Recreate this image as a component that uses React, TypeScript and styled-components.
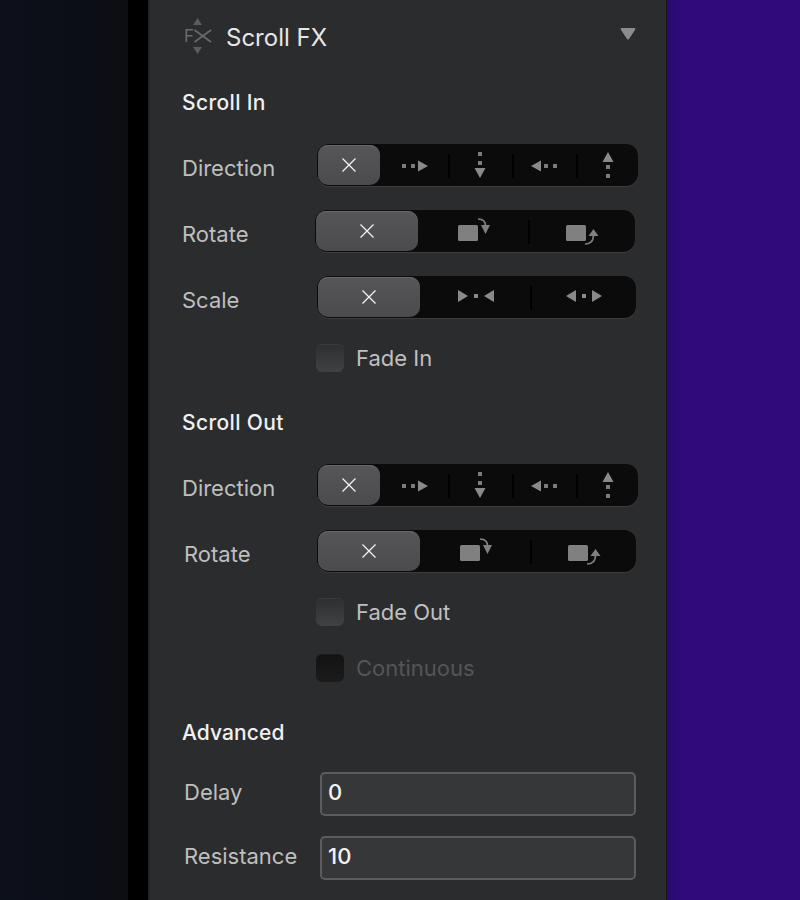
import React from "react"
import styled, { createGlobalStyle } from "styled-components"

const GlobalStyle = createGlobalStyle`
  html, body {
    margin: 0;
    padding: 0;
    background: #000;
  }
  body {
    font-family: Inter, "Noto Sans", "Liberation Sans", sans-serif;
  }
`

const ArrowIcon: React.FC<{ angle: number }> = ({ angle }) => (
  <svg width="28" height="28" viewBox="0 0 28 28" style={{ transform: `rotate(${angle}deg)` }}>
    <rect x="1" y="12" width="4" height="4" fill="#7c7c7c" />
    <rect x="10" y="12" width="4" height="4" fill="#7c7c7c" />
    <polygon points="17,8.5 27,14 17,19.5" fill="#8a8a8a" />
  </svg>
)

const ScaleIcon: React.FC<{ out?: boolean }> = ({ out }) => (
  <svg width="36" height="14" viewBox="0 0 36 14">
    <rect x="16" y="4" width="4" height="4" fill="#8a8a8a" />
    {out ? (
      <>
        <polygon points="0,6 10,0 10,12" fill="#8a8a8a" />
        <polygon points="36,6 26,0 26,12" fill="#8a8a8a" />
      </>
    ) : (
      <>
        <polygon points="10,6 0,0 0,12" fill="#8a8a8a" />
        <polygon points="26,6 36,0 36,12" fill="#8a8a8a" />
      </>
    )}
  </svg>
)

const RotateIcon: React.FC<{ up?: boolean }> = ({ up }) => (
  <svg width="33" height="27" viewBox="0 0 33 27">
    <rect x="0" y="7" width="20" height="16" rx="1.5" fill="#808080" />
    {up ? (
      <>
        <path d="M19 26 C24 26 27.5 23.5 27.5 17" fill="none" stroke="#808080" strokeWidth="1.7" />
        <polygon points="27.5,11 32.5,18 22.5,18" fill="#808080" />
      </>
    ) : (
      <>
        <path d="M20 1 C25 1 27.5 3.5 27.5 8" fill="none" stroke="#808080" strokeWidth="1.7" />
        <polygon points="27.5,16 32,7 23,7" fill="#808080" />
      </>
    )}
  </svg>
)

const CloseIcon = () => (
  <svg width="16" height="16" viewBox="0 0 16 16">
    <path d="M1.5 1.5 L14.5 14.5 M14.5 1.5 L1.5 14.5" stroke="#f2f2f2" strokeWidth="1.3" fill="none" />
  </svg>
)

const FxLogo = () => (
  <svg width="30" height="38" viewBox="0 0 30 38">
    <polygon points="13.5,0 18,7 9,7" fill="#5c5c5c" />
    <polygon points="13.5,36 18,29 9,29" fill="#5c5c5c" />
    <text x="0" y="24" fontFamily="Inter, sans-serif" fontSize="17" fill="#6a6a6a">
      F
    </text>
    <path d="M10.5 12 L27 24 M27 12 L10.5 24" stroke="#6a6a6a" strokeWidth="1.7" fill="none" />
  </svg>
)

const Page = styled.div`
  display: flex;
  width: 800px;
  height: 900px;
  overflow: hidden;
`

const Backdrop = styled.div`
  width: 128px;
  background: linear-gradient(90deg, #0c101a 0%, #0c0e16 70%, #0d0e12 100%);
`

const Gutter = styled.div`
  width: 20px;
  background: #000;
`

const Panel = styled.main`
  box-sizing: border-box;
  width: 519px;
  height: 900px;
  padding: 0 28px 0 32px;
  background: #2b2c2e;
  border-left: 2px solid #242526;
  border-right: 1px solid #161618;
`

const Canvas = styled.div`
  flex: 1;
  background: linear-gradient(90deg, #2a0a72 0, #300a7b 14px);
`

const Header = styled.header`
  display: flex;
  align-items: center;
  height: 74px;
  padding-left: 2px;
`

const Title = styled.h1`
  margin: 0 0 0 12px;
  flex: 1;
  font-size: 24px;
  font-weight: 400;
  color: #e6e6e6;
`

const Caret = styled.svg`
  margin: 0 2px 6px 0;
`

const Heading = styled.h2<{ $top: number; $tracking?: number }>`
  margin: ${(p) => p.$top}px 0 0;
  height: 26px;
  font-size: 21px;
  line-height: 28px;
  font-weight: 500;
  letter-spacing: ${(p) => p.$tracking ?? 0.35}px;
  color: #f0f0f0;
`

const Row = styled.div<{ $top: number; $inset?: number }>`
  display: flex;
  height: 42px;
  margin-top: ${(p) => p.$top}px;
  padding-left: ${(p) => p.$inset ?? 0}px;
`

const Label = styled.span<{ $width: number }>`
  width: ${(p) => p.$width}px;
  flex: none;
  font-size: 22px;
  line-height: 48px;
  color: #bfbfbf;
`

const Segmented = styled.div<{ $width: number; $columns: string }>`
  box-sizing: border-box;
  display: grid;
  flex: none;
  grid-template-columns: ${(p) => p.$columns};
  width: ${(p) => p.$width}px;
  height: 42px;
  padding: 1px;
  background: #0b0b0c;
  border-radius: 12px;
  box-shadow: 0 1px 0 #3c3d3f;
`

const Segment = styled.div<{ $active?: boolean; $divider?: boolean; $nudge?: number; $drop?: number }>`
  position: relative;
  display: flex;
  align-items: center;
  justify-content: center;
  padding-left: ${(p) => p.$nudge ?? 0}px;
  padding-top: ${(p) => p.$drop ?? 0}px;
  border-radius: 10px;
  background: ${(p) => (p.$active ? "linear-gradient(#565658, #4b4b4d)" : "transparent")};
  box-shadow: ${(p) => (p.$active ? "inset 0 1px 0 #686869" : "none")};

  ${(p) =>
    p.$divider &&
    `&::before {
      content: "";
      position: absolute;
      left: 0;
      top: 9px;
      width: 2px;
      height: 24px;
      background: #000;
    }`}
`

const CheckRow = styled.label<{ $top: number }>`
  display: flex;
  align-items: center;
  gap: 12px;
  height: 28px;
  margin: ${(p) => p.$top}px 0 0 134px;
`

const Box = styled.span<{ $disabled?: boolean }>`
  width: 28px;
  height: 28px;
  border-radius: 6px;
  background: ${(p) =>
    p.$disabled ? "linear-gradient(#121213, #1c1c1d)" : "linear-gradient(#2d2e30, #414244)"};
  box-shadow: inset 0 1px 0 ${(p) => (p.$disabled ? "#1a1a1b" : "#3a3b3d")};
`

const CheckText = styled.span<{ $disabled?: boolean }>`
  font-size: 22px;
  color: ${(p) => (p.$disabled ? "#545557" : "#bfbfbf")};
`

const FieldRow = styled.div<{ $top: number }>`
  display: flex;
  height: 44px;
  margin-top: ${(p) => p.$top}px;
  padding-left: 2px;

  ${Label} {
    line-height: 40px;
  }
`

const FieldInput = styled.input`
  box-sizing: border-box;
  width: 316px;
  height: 44px;
  padding: 0 6px 4px;
  margin: 0;
  font-family: inherit;
  font-size: 22px;
  font-weight: 500;
  color: #f4f4f4;
  background: #363739;
  border: 2px solid #5b5c5e;
  border-radius: 5px;
  outline: none;
`

const DirectionControl = () => (
  <Segmented $width={321} $columns="62px 68px 64px 64px 1fr">
    <Segment $active>
      <CloseIcon />
    </Segment>
    <Segment $nudge={2} $drop={2}>
      <ArrowIcon angle={0} />
    </Segment>
    <Segment $divider>
      <ArrowIcon angle={90} />
    </Segment>
    <Segment $divider $drop={2}>
      <ArrowIcon angle={180} />
    </Segment>
    <Segment $divider $nudge={2}>
      <ArrowIcon angle={270} />
    </Segment>
  </Segmented>
)

const RotateControl: React.FC<{ width: number }> = ({ width }) => (
  <Segmented $width={width} $columns="102px 110px 1fr">
    <Segment $active>
      <CloseIcon />
    </Segment>
    <Segment $nudge={3}>
      <RotateIcon />
    </Segment>
    <Segment $divider $nudge={3}>
      <RotateIcon up />
    </Segment>
  </Segmented>
)

const ScaleControl = () => (
  <Segmented $width={319} $columns="102px 110px 1fr">
    <Segment $active>
      <CloseIcon />
    </Segment>
    <Segment $nudge={1}>
      <ScaleIcon />
    </Segment>
    <Segment $divider $nudge={3}>
      <ScaleIcon out />
    </Segment>
  </Segmented>
)

export default function App() {
  return (
    <Page>
      <GlobalStyle />
      <Backdrop />
      <Gutter />
      <Panel>
        <Header>
          <FxLogo />
          <Title>Scroll FX</Title>
          <Caret width="16" height="12" viewBox="0 0 16 12">
            <path d="M1.5 0 H14.5 Q16 0 15 2 L9 11 Q8 12 7 11 L1 2 Q0 0 1.5 0 Z" fill="#8c8c8c" />
          </Caret>
        </Header>

        <Heading $top={15}>Scroll In</Heading>
        <Row $top={29}>
          <Label $width={135}>Direction</Label>
          <DirectionControl />
        </Row>
        <Row $top={24}>
          <Label $width={133}>Rotate</Label>
          <RotateControl width={320} />
        </Row>
        <Row $top={24}>
          <Label $width={135}>Scale</Label>
          <ScaleControl />
        </Row>
        <CheckRow $top={26}>
          <Box />
          <CheckText>Fade In</CheckText>
        </CheckRow>

        <Heading $top={37}>Scroll Out</Heading>
        <Row $top={29}>
          <Label $width={135}>Direction</Label>
          <DirectionControl />
        </Row>
        <Row $top={24} $inset={2}>
          <Label $width={133}>Rotate</Label>
          <RotateControl width={319} />
        </Row>
        <CheckRow $top={26}>
          <Box />
          <CheckText>Fade Out</CheckText>
        </CheckRow>
        <CheckRow $top={28}>
          <Box $disabled />
          <CheckText $disabled>Continuous</CheckText>
        </CheckRow>

        <Heading $top={37} $tracking={0.1}>
          Advanced
        </Heading>
        <FieldRow $top={27}>
          <Label $width={136}>Delay</Label>
          <FieldInput readOnly value="0" />
        </FieldRow>
        <FieldRow $top={20}>
          <Label $width={136}>Resistance</Label>
          <FieldInput readOnly value="10" />
        </FieldRow>
      </Panel>
      <Canvas />
    </Page>
  )
}
